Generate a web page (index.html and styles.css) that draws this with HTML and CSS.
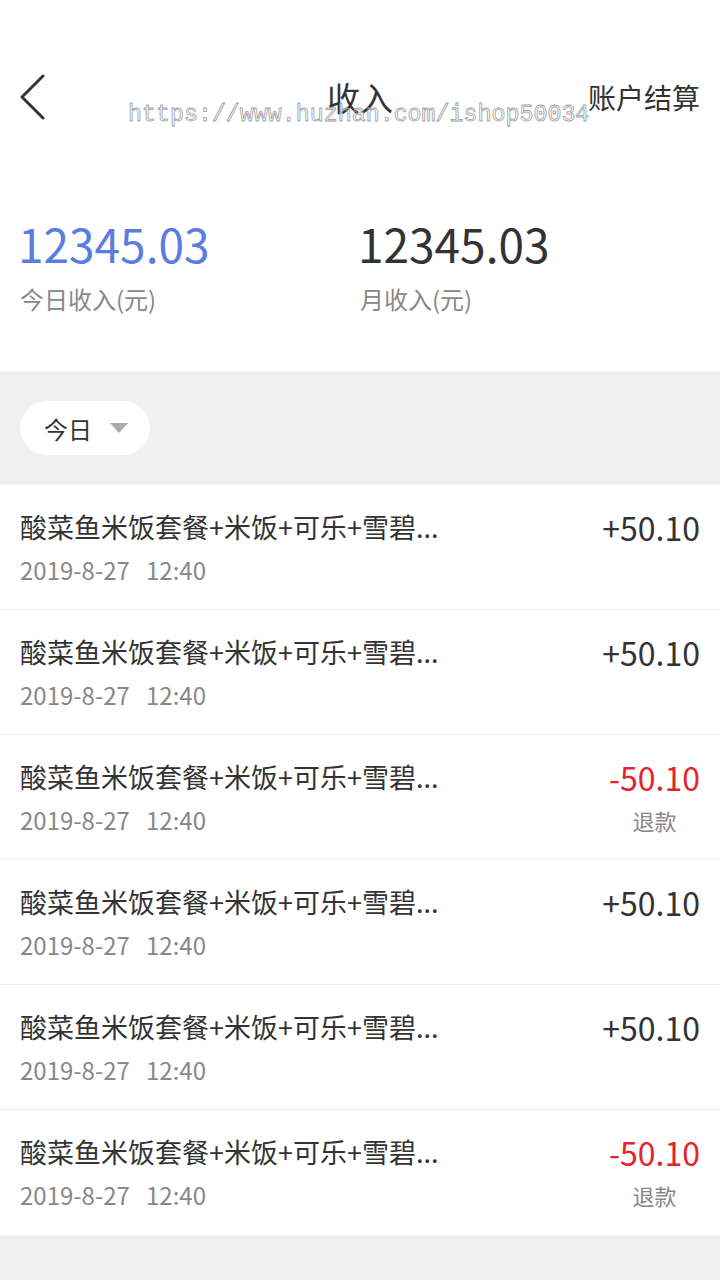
FILE: index.html
```html
<!DOCTYPE html>
<html lang="zh-CN">
<head>
<meta charset="utf-8">
<title>收入</title>
<link rel="stylesheet" href="styles.css">
</head>
<body>
<div class="page">
  <div class="statusbar"></div>
  <header class="nav">
    <span class="back">
      <svg width="28" height="46" viewBox="0 0 28 46"><path d="M25 2 L4 23 L25 44" fill="none" stroke="#333" stroke-width="3" stroke-linecap="round" stroke-linejoin="round"/></svg>
    </span>
    <h1 class="title">收入</h1>
    <span class="action">账户结算</span>
    <span class="watermark">https://www.huzhan.com/ishop50034</span>
  </header>

  <section class="stats">
    <div class="stat">
      <div class="stat-num blue">12345.03</div>
      <div class="stat-label">今日收入(元)</div>
    </div>
    <div class="stat">
      <div class="stat-num">12345.03</div>
      <div class="stat-label">月收入(元)</div>
    </div>
  </section>

  <section class="filter">
    <div class="pill">今日<span class="caret"></span></div>
  </section>

  <ul class="list">
    <li class="row">
      <div class="info"><div class="name">酸菜鱼米饭套餐+米饭+可乐+雪碧...</div><div class="time">2019-8-27&nbsp;&nbsp;&nbsp;12:40</div></div>
      <div class="money"><div class="amt">+50.10</div></div>
    </li>
    <li class="row">
      <div class="info"><div class="name">酸菜鱼米饭套餐+米饭+可乐+雪碧...</div><div class="time">2019-8-27&nbsp;&nbsp;&nbsp;12:40</div></div>
      <div class="money"><div class="amt">+50.10</div></div>
    </li>
    <li class="row">
      <div class="info"><div class="name">酸菜鱼米饭套餐+米饭+可乐+雪碧...</div><div class="time">2019-8-27&nbsp;&nbsp;&nbsp;12:40</div></div>
      <div class="money"><div class="amt red">-50.10</div><div class="refund">退款</div></div>
    </li>
    <li class="row">
      <div class="info"><div class="name">酸菜鱼米饭套餐+米饭+可乐+雪碧...</div><div class="time">2019-8-27&nbsp;&nbsp;&nbsp;12:40</div></div>
      <div class="money"><div class="amt">+50.10</div></div>
    </li>
    <li class="row">
      <div class="info"><div class="name">酸菜鱼米饭套餐+米饭+可乐+雪碧...</div><div class="time">2019-8-27&nbsp;&nbsp;&nbsp;12:40</div></div>
      <div class="money"><div class="amt">+50.10</div></div>
    </li>
    <li class="row">
      <div class="info"><div class="name">酸菜鱼米饭套餐+米饭+可乐+雪碧...</div><div class="time">2019-8-27&nbsp;&nbsp;&nbsp;12:40</div></div>
      <div class="money"><div class="amt red">-50.10</div><div class="refund">退款</div></div>
    </li>
  </ul>
</div>
</body>
</html>
```
FILE: styles.css
```css
* { box-sizing: border-box; }
html, body {
  margin: 0;
  padding: 0;
  background: #f0f0f0;
  font-family: "Noto Sans CJK SC", "Noto Sans", sans-serif;
  color: #333;
}
.page {
  width: 720px;
  min-height: 1280px;
  background: #f0f0f0;
}
.statusbar {
  height: 60px;
  background: #fff;
}
.nav {
  position: relative;
  height: 74px;
  background: #fff;
  display: flex;
  align-items: center;
  justify-content: space-between;
  padding: 0 20px 0 18px;
}
.back {
  display: flex;
  width: 110px;
}
.title {
  margin: 0;
  font-size: 33px;
  font-weight: 400;
  line-height: 40px;
  color: #333;
  position: absolute;
  left: 0;
  right: 0;
  text-align: center;
  pointer-events: none;
}
.action {
  font-size: 28px;
  line-height: 40px;
  color: #333;
  position: relative;
  z-index: 1;
}
.watermark {
  position: absolute;
  left: 128px;
  top: 41px;
  font-family: "Liberation Mono", monospace;
  font-size: 23.3px;
  line-height: 28px;
  color: transparent;
  -webkit-text-stroke: 0.8px #a0a0a0;
  pointer-events: none;
}
.stats {
  background: #fff;
  display: grid;
  grid-template-columns: 1fr 1fr;
  padding: 79px 20px 55px;
}
.stat-num {
  font-size: 46px;
  line-height: 60px;
  color: #333;
  margin-left: -2px;
}
.stat-num.blue { color: #5b7de1; }
.stat-label {
  margin-top: 9px;
  font-size: 24px;
  line-height: 34px;
  color: #888;
}
.filter {
  padding: 30px 20px;
}
.pill {
  width: 130px;
  height: 54px;
  border-radius: 27px;
  background: #fff;
  display: flex;
  align-items: center;
  padding-left: 24px;
  font-size: 24px;
  color: #333;
}
.caret {
  margin-left: 18px;
  width: 0;
  height: 0;
  border-left: 9px solid transparent;
  border-right: 9px solid transparent;
  border-top: 10px solid #aaa;
}
.list {
  list-style: none;
  margin: 0;
  padding: 0;
  background: #fff;
}
.row {
  display: flex;
  justify-content: space-between;
  padding: 24px 20px;
  border-bottom: 1px solid #ececec;
  height: 125px;
}
.row:last-child { border-bottom: none; }
.name {
  font-size: 27px;
  line-height: 36px;
  color: #333;
}
.time {
  margin-top: 10px;
  font-size: 24px;
  line-height: 30px;
  color: #888;
}
.money {
  text-align: center;
}
.amt {
  font-size: 32px;
  line-height: 36px;
  color: #333;
}
.amt.red { color: #e8222a; }
.refund {
  margin-top: 10px;
  font-size: 22px;
  line-height: 30px;
  color: #888;
}
```
